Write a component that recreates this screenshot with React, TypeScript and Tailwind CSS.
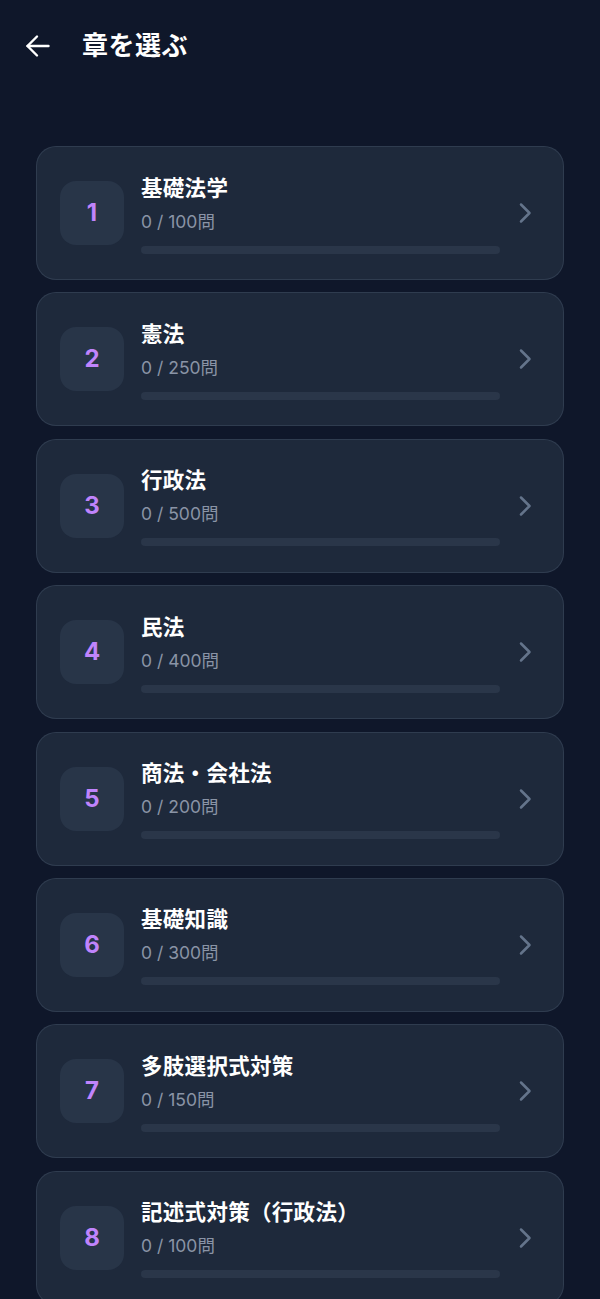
import React from 'react'

const chapters = [
  { no: 1, title: '基礎法学', total: 100 },
  { no: 2, title: '憲法', total: 250 },
  { no: 3, title: '行政法', total: 500 },
  { no: 4, title: '民法', total: 400 },
  { no: 5, title: '商法・会社法', total: 200 },
  { no: 6, title: '基礎知識', total: 300 },
  { no: 7, title: '多肢選択式対策', total: 150 },
  { no: 8, title: '記述式対策（行政法）', total: 100 },
]

function BackArrow() {
  return (
    <svg width="26" height="26" viewBox="0 0 26 26" fill="none" stroke="currentColor" strokeWidth="2.4" strokeLinecap="round" strokeLinejoin="round">
      <path d="M23.5 13H2.5" />
      <path d="M12 3.5L2.5 13l9.5 9.5" />
    </svg>
  )
}

function Chevron() {
  return (
    <svg width="24" height="24" viewBox="0 0 24 24" fill="none" stroke="currentColor" strokeWidth="2.5" strokeLinecap="round" strokeLinejoin="round">
      <path d="M9 3.5l8.5 8.5L9 20.5" />
    </svg>
  )
}

export default function App() {
  return (
    <div
      className="min-h-screen bg-[#0f172a] text-white"
      style={{ fontFamily: 'Inter, "Noto Sans CJK JP", sans-serif' }}
    >
      {/* ヘッダー */}
      <header className="flex h-[92px] items-center gap-[31px] pl-[25px]">
        <button className="text-white">
          <BackArrow />
        </button>
        <h1 className="text-[26px] font-bold leading-none tracking-[0.5px]">章を選ぶ</h1>
      </header>

      <div className="flex flex-col gap-[12.4px] px-9 pt-[54px] pb-8">
        {chapters.map((ch) => (
          <div
            key={ch.no}
            className="flex h-[134px] items-center rounded-[20px] border border-[#334155]/80 bg-[#1e293b] pl-[23px] pr-[27px]"
          >
            <div className="flex h-16 w-16 shrink-0 items-center justify-center rounded-2xl bg-[#283548]">
              <span className="text-[24px] font-bold text-[#c084fc]">{ch.no}</span>
            </div>
            <div className="ml-[17px] flex flex-1 flex-col">
              <div className="text-[21.5px] font-bold leading-[30px] tracking-[0.3px]">{ch.title}</div>
              <div className="mt-[7px] text-[17.5px] leading-[24px] text-[#8a94a6]">0 / {ch.total}問</div>
              <div className="mt-[12px] h-2 w-full rounded-full bg-[#2a3649]" />
            </div>
            <div className="ml-3 text-[#64748b]">
              <Chevron />
            </div>
          </div>
        ))}
      </div>
    </div>
  )
}
